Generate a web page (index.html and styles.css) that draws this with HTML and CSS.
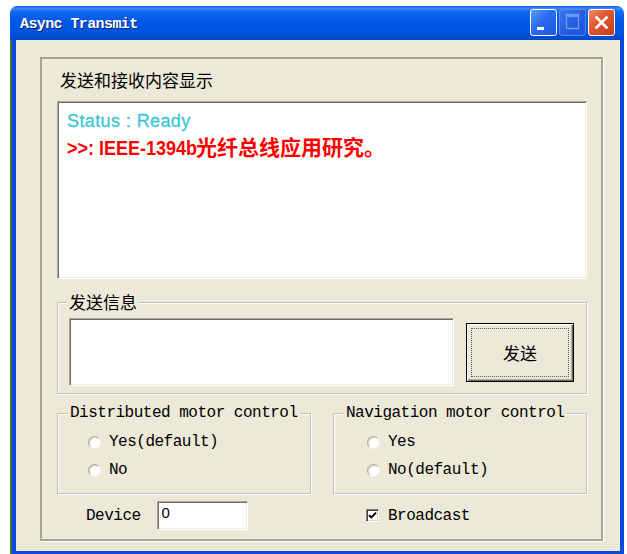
FILE: index.html
```html
<!DOCTYPE html>
<html lang="zh-CN">
<head>
<meta charset="utf-8">
<title>Async Transmit</title>
<link rel="stylesheet" href="styles.css">
</head>
<body>
<div class="window">
  <div class="titlebar">
    <span class="title">Async Transmit</span>
    <div class="caption-buttons">
      <span class="cbtn min">
        <svg width="25" height="25" viewBox="0 0 25 25"><rect x="6" y="17" width="7" height="3" fill="#fff"/></svg>
      </span>
      <span class="cbtn max">
        <svg width="25" height="25" viewBox="0 0 25 25"><path d="M6.5 4.5h12v14h-12z" fill="none" stroke="#6f98ee" stroke-width="1.3"/><rect x="6" y="4" width="13" height="3" fill="#6f98ee"/></svg>
      </span>
      <span class="cbtn close">
        <svg width="25" height="25" viewBox="0 0 25 25"><path d="M7.5 7.5l10 10M17.5 7.5l-10 10" stroke="#fff" stroke-width="2.6" stroke-linecap="square"/></svg>
      </span>
    </div>
  </div>
  <div class="client">
    <div class="panel">
      <div class="panel-title">发送和接收内容显示</div>
      <div class="log sunken">
        <div class="status">Status : Ready</div>
        <div class="msg"><span class="msg-latin"><span class="narrow">&gt;&gt;: IEEE-1394b</span></span><span class="msg-cjk">光纤总线应用研究。</span></div>
      </div>
      <fieldset class="group send-group">
        <legend class="cjk-legend">发送信息</legend>
        <div class="send-row">
          <div class="edit sunken"></div>
          <button class="btn default-btn" type="button"><span class="focus">发送</span></button>
        </div>
      </fieldset>
      <div class="options">
        <fieldset class="group mono left-group">
          <legend>Distributed motor control</legend>
          <div class="radio"><span class="rb"></span>Yes(default)</div>
          <div class="radio"><span class="rb"></span>No</div>
        </fieldset>
        <fieldset class="group mono right-group">
          <legend>Navigation motor control</legend>
          <div class="radio"><span class="rb"></span>Yes</div>
          <div class="radio"><span class="rb"></span>No(default)</div>
        </fieldset>
      </div>
      <div class="bottom-row mono">
        <div class="device"><span>Device</span><span class="edit small sunken">0</span></div>
        <div class="check">
          <span class="cb"><svg width="9" height="9" viewBox="0 0 9 9"><path d="M1 4.2l2.3 2.3L8 1.6" fill="none" stroke="#000" stroke-width="1.9"/></svg></span>Broadcast
        </div>
      </div>
    </div>
  </div>
</div>
</body>
</html>
```

FILE: styles.css
```css
* { box-sizing: border-box; }

html, body {
  margin: 0;
  background: #fff;
}

body {
  width: 627px;
  height: 554px;
  overflow: hidden;
  font-family: "Noto Sans CJK SC", sans-serif;
  color: #000;
}

/* window frame */
.window {
  width: 614px;
  height: 548px;
  margin: 6px 0 0 10px;
  display: flex;
  flex-direction: column;
}

.titlebar {
  height: 34px;
  flex: none;
  display: flex;
  align-items: flex-start;
  justify-content: space-between;
  padding: 3px 9px 0 10px;
  border-radius: 7px 7px 0 0;
  background: linear-gradient(to bottom,
    #0a5ce6 0%, #3a8af6 7%, #1468f0 16%, #0058e8 45%, #0054e0 75%, #0048cc 100%);
}

.title {
  margin-top: 7px;
  font-family: "Liberation Mono", monospace;
  font-weight: bold;
  font-size: 15px;
  letter-spacing: -0.6px;
  line-height: 18px;
  color: #fff;
  text-shadow: 1px 1px 0 #0a246a;
}

.caption-buttons {
  display: flex;
  gap: 2px;
}

.cbtn {
  width: 27px;
  height: 27px;
  border: 1px solid #fff;
  border-radius: 3px;
  display: block;
}
.cbtn svg { display: block; }

.cbtn.min {
  background: linear-gradient(135deg, #5a98f8 0%, #2a6cf0 45%, #1c58e0 100%);
}
.cbtn.max {
  border-color: #5b86ea;
  background: linear-gradient(135deg, #3a78f0 0%, #2660e2 50%, #1d52d8 100%);
}
.cbtn.close {
  background: linear-gradient(135deg, #ec8a66 0%, #e05a34 40%, #c83a18 100%);
}

.client {
  flex: 1;
  margin-left: 2px;
  background: #ece9d8;
  border: solid #0c4ad9;
  border-width: 0 4px 3px 4px;
  box-shadow: -2px 0 0 #3c7a2e;
  padding: 17px 0 0 24px;
}

/* main etched panel */
.panel {
  width: 563px;
  height: 484px;
  border: 2px solid #a7a493;
  box-shadow: 1px 1px 0 #fff;
  padding: 0 14px 0 15px;
}

.panel-title {
  margin: 11px 0 0 3px;
  font-size: 17px;
  line-height: 20px;
}

/* sunken client edges */
.sunken {
  background: #fff;
  border: 1px solid;
  border-color: #aca899 #fff #fff #aca899;
  box-shadow: inset 1px 1px 0 #716f64, inset -1px -1px 0 #f1efe2;
}

.log {
  margin-top: 11px;
  height: 178px;
  padding: 8px 0 0 9px;
}

.status {
  font-family: "Liberation Sans", sans-serif;
  font-size: 18px;
  line-height: 22px;
  letter-spacing: 0.4px;
  color: #3cc6d3;
  -webkit-text-stroke: 0.3px #3cc6d3;
}

.msg {
  margin-top: 1px;
  line-height: 26px;
  color: #ff0000;
  font-weight: bold;
  white-space: nowrap;
}
/* condensed latin run: box keeps the narrowed width */
.msg-latin {
  display: inline-block;
  width: 129px;
  font-family: "Liberation Sans", sans-serif;
  font-size: 20px;
  vertical-align: baseline;
}
.msg-latin .narrow {
  display: inline-block;
  transform: scaleX(0.9);
  transform-origin: 0 50%;
}
.msg-cjk {
  font-family: "Noto Sans CJK SC", sans-serif;
  font-size: 21px;
}

/* group boxes */
.group {
  margin: 0;
  border: 1px solid #c2bfae;
  box-shadow: inset 1px 1px 0 #fff, 1px 1px 0 #fff;
  min-width: 0;
}
.group legend {
  padding: 0 2px;
  margin-left: -2px;
  background: #ece9d8;
}

.send-group {
  margin-top: 13px;
  padding: 6px 12px 7px 11px;
}
.cjk-legend {
  font-size: 17px;
  line-height: 20px;
}

.send-row {
  display: flex;
  align-items: center;
}
.edit {
  width: 385px;
  height: 68px;
}

.btn {
  margin-left: 12px;
  width: 108px;
  height: 59px;
  padding: 4px;
  background: #ece9d8;
  border: 1px solid #000;
  box-shadow: inset 1px 1px 0 #fff, inset -1px -1px 0 #716f64, inset -2px -2px 0 #aca899;
  font-family: "Noto Sans CJK SC", sans-serif;
  font-size: 17px;
  color: #000;
}
.btn .focus {
  display: flex;
  align-items: center;
  justify-content: center;
  width: 100%;
  height: 100%;
  border: 1px dotted #555;
}

.mono {
  font-family: "Liberation Mono", monospace;
  font-size: 16px;
  letter-spacing: -0.5px;
}

.options {
  margin-top: 10px;
  display: grid;
  grid-template-columns: 254px 254px;
  column-gap: 22px;
}
.options .group {
  padding: 6px 0 9px 30px;
}
.options .right-group {
  padding-left: 33px;
}
.options legend {
  line-height: 18px;
  margin-left: -20px;
}
.options .right-group legend {
  margin-left: -23px;
}

.radio {
  display: flex;
  align-items: center;
  height: 28px;
}
.rb {
  width: 13px;
  height: 13px;
  margin-right: 8px;
  border-radius: 50%;
  border: 1px solid;
  border-color: #b0ad9c #f4f3ee #f4f3ee #b0ad9c;
  background: radial-gradient(circle at 60% 60%, #fff 0%, #fff 55%, #eeede6 100%);
  box-shadow: inset 1px 1px 0 #d4d1c2;
}

.bottom-row {
  margin-top: 7px;
  display: grid;
  grid-template-columns: 254px 254px;
  column-gap: 22px;
  height: 29px;
}
.device {
  display: flex;
  align-items: center;
  padding-left: 29px;
}
.edit.small {
  width: 91px;
  height: 29px;
  margin-left: 16px;
  padding: 2px 0 0 4px;
  font-family: "Liberation Sans", sans-serif;
  font-size: 15px;
  letter-spacing: 0;
  line-height: 18px;
}
.check {
  display: flex;
  align-items: center;
  padding-left: 33px;
}
.cb {
  width: 13px;
  height: 13px;
  margin-right: 9px;
  display: flex;
  align-items: center;
  justify-content: center;
  background: #fff;
  border: 1px solid;
  border-color: #808080 #fff #fff #808080;
  box-shadow: inset 1px 1px 0 #404040, inset -1px -1px 0 #d4d0c8;
}
.cb svg { display: block; }
```
